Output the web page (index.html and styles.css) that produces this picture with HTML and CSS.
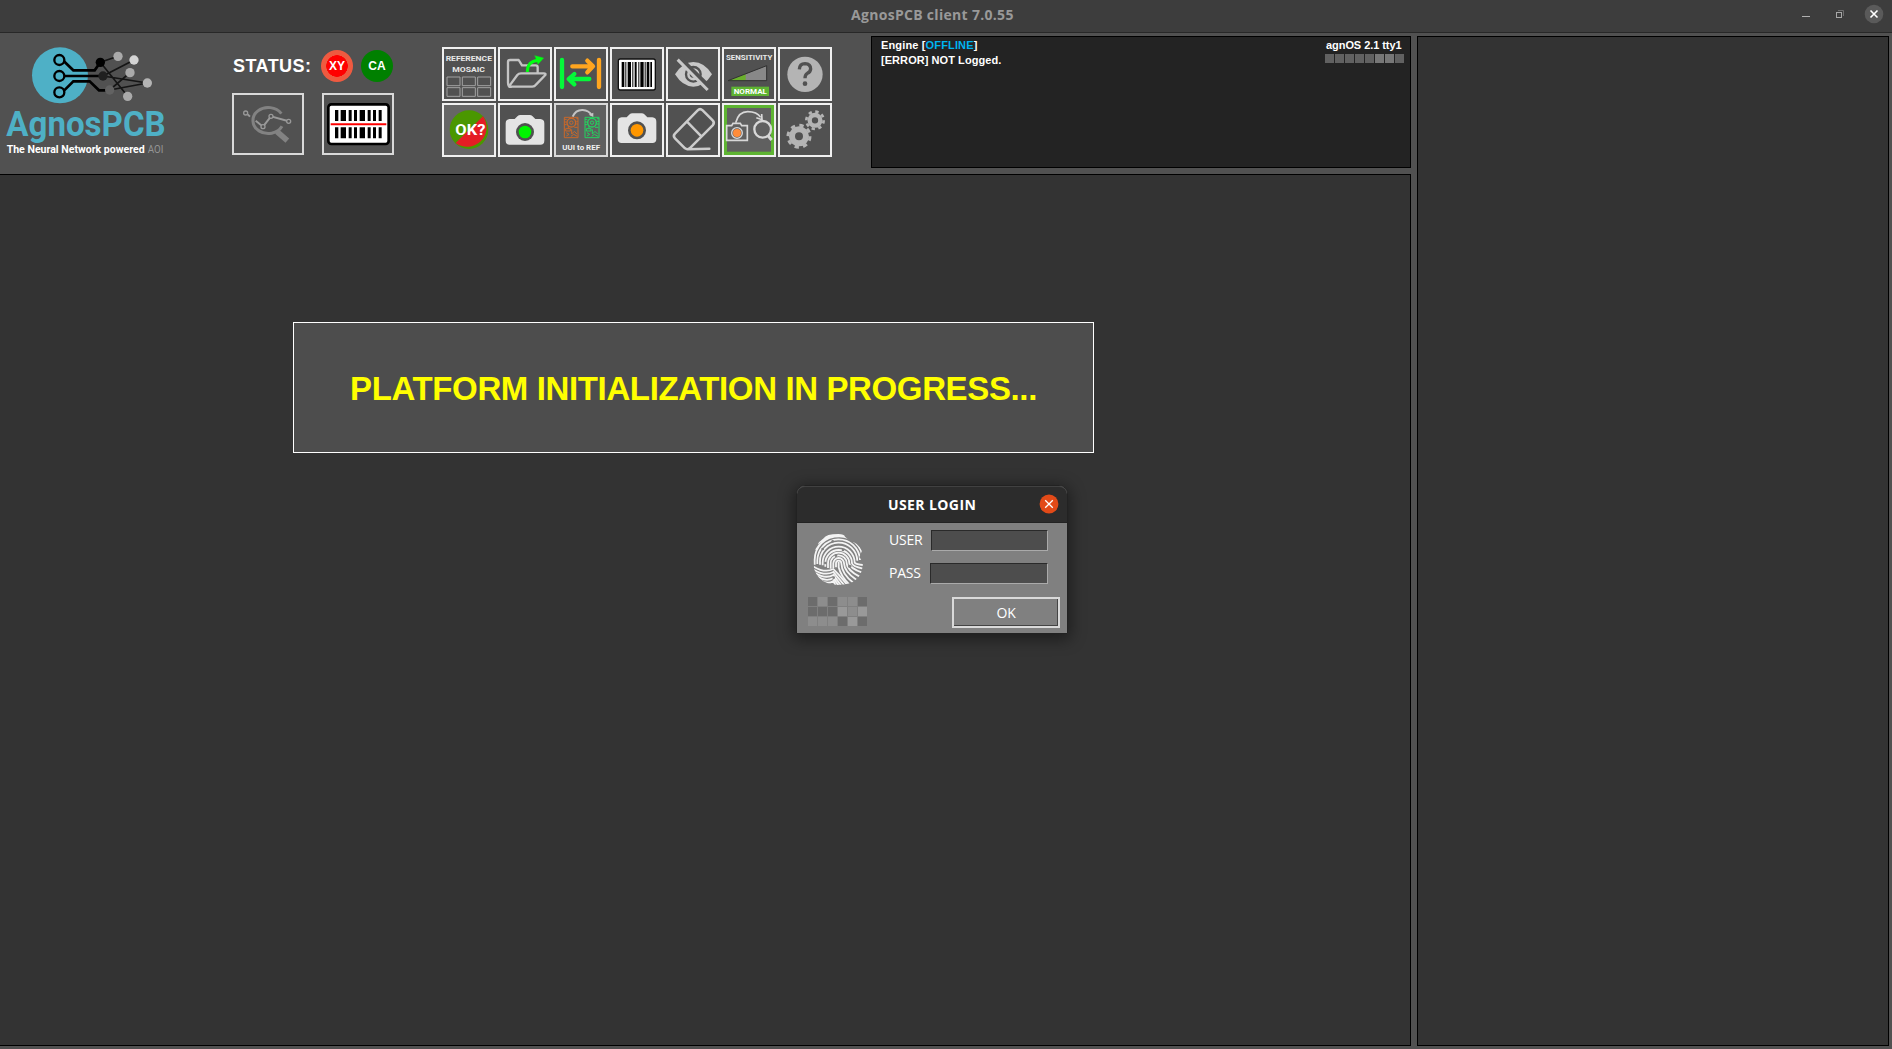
FILE: index.html
```html
<!DOCTYPE html>
<html lang="en">
<head>
<meta charset="utf-8">
<title>AgnosPCB client 7.0.55</title>
<link rel="stylesheet" href="styles.css">
</head>
<body>
<div class="titlebar">
  <span class="title">AgnosPCB client 7.0.55</span>
  <svg class="winctl" width="100" height="32" viewBox="0 0 100 32" fill="none">
    <path d="M10 16.500h8" stroke="#b0b0b0"/>
    <path d="M46 10.500h5.500v5.500" stroke="#6f6f6f"/>
    <rect x="44.500" y="12.500" width="5" height="5" stroke="#a8a8a8"/>
    <circle cx="82" cy="14" r="9.300" fill="#5a5a5a"/>
    <path d="M78.500 10.500l7 7m0-7l-7 7" stroke="#fff" stroke-width="1.600"/>
  </svg>
</div>
<div class="workspace">
  <div class="left">
    <header class="header">
      <svg class="logo" width="185" height="138" viewBox="0 9 555 414">
        <circle cx="180" cy="136" r="84" fill="#4eb0c6"/>
        <g fill="none" stroke="#000" stroke-width="8">
          <circle cx="178" cy="90" r="15" stroke-width="7"/><circle cx="178" cy="138" r="15" stroke-width="7"/><circle cx="178" cy="187" r="15" stroke-width="7"/>
          <path d="M191 93L220 121H284L301 97M194 138H309M192 182L220 154H269L297 181H330"/>
        </g>
        <g fill="none" stroke="#151515" stroke-width="5">
          <path d="M301 97L354 79M301 97L383 199M309 138L402 90M309 138L442 159M329 180L390 128M329 180L442 159"/>
        </g>
        <circle cx="301" cy="97" r="14" fill="#000"/><circle cx="309" cy="138" r="14" fill="#202020"/><circle cx="329" cy="180" r="14" fill="#626262"/>
        <g fill="#aaa"><circle cx="354" cy="79" r="14"/><circle cx="390" cy="128" r="14"/><circle cx="383" cy="199" r="14"/><circle cx="442" cy="159" r="14" fill="#b4b4b4"/><circle cx="402" cy="90" r="14" fill="#d4d4d4"/></g>
        <text x="19" y="319" font-size="104" font-weight="700" fill="#4eb0c6" textLength="478" lengthAdjust="spacingAndGlyphs">AgnosPCB</text>
        <text x="20" y="369" font-size="34" font-weight="700" fill="#fff" textLength="414" lengthAdjust="spacingAndGlyphs">The Neural Network powered</text>
        <text x="443" y="370" font-size="35" fill="#949494" textLength="47" lengthAdjust="spacingAndGlyphs">AOI</text>
      </svg>
      <div class="status">
        <div class="status-row">
          <span class="status-label">STATUS:</span>
          <span class="dot xy">XY</span><span class="dot ca">CA</span>
        </div>
        <div class="status-buttons">
          <div class="bigbtn">
            <svg width="68" height="58" viewBox="57 195 204 174" fill="none" stroke="#828282">
              <path d="M199 251A46 39 0 1 0 201 289" stroke-width="9"/><path d="M186 305L217 332" stroke-width="17"/>
              <path d="M98 253l7 7M122 272L144 290L168 259L221 274" stroke="#999" stroke-width="6"/>
              <g stroke="#999" stroke-width="4" fill="#515151"><circle cx="92" cy="249" r="6"/><circle cx="144" cy="290" r="6"/><circle cx="168" cy="259" r="6"/><circle cx="221" cy="274" r="6"/></g>
            </svg>
          </div>
          <div class="bigbtn">
            <svg width="68" height="58" viewBox="327 195 204 174">
              <rect x="340" y="223" width="181" height="119" rx="9" fill="#fff" stroke="#000" stroke-width="8"/>
              <path d="M360 240h10v33h-10zM377 240h16v33h-16zM401 240h9v33h-9zM417 240h9v33h-9zM434 240h16v33h-16zM458 240h9v33h-9zM474 240h9v33h-9zM491 240h9v33h-9zM360 292h10v33h-10zM377 292h16v33h-16zM401 292h9v33h-9zM417 292h9v33h-9zM434 292h16v33h-16zM458 292h9v33h-9zM474 292h9v33h-9zM491 292h9v33h-9z"/>
              <path d="M347 283H514" stroke="#f00" stroke-width="6"/>
            </svg>
          </div>
        </div>
      </div>
      <div class="tools">
        <div class="tool"><svg viewBox="27 27 150 150">
          <g font-weight="700" font-size="23" fill="#e8e8e8"><text x="32" y="64" textLength="139" lengthAdjust="spacingAndGlyphs">REFERENCE</text><text x="52" y="95" textLength="98" lengthAdjust="spacingAndGlyphs">MOSAIC</text></g>
          <path d="M36 111h39v26H36zM82 111h39v26H82zM128 111h39v26h-39zM36 143h39v26H36zM82 143h39v26H82zM128 143h39v26h-39z" fill="none" stroke="#a2a2a2" stroke-width="3"/>
        </svg></div>
        <div class="tool"><svg viewBox="195 27 150 150" fill="none" stroke-linejoin="round" stroke-linecap="round">
          <path d="M222 139Q219 134 219 128V66Q219 60 225 60H251L261 76H302Q308 76 308 82V98M222 139Q225 142 230 140H292Q299 140 303 134L331 105Q333 100 327 100H258Q251 100 247 105Z" stroke="#c4c4c4" stroke-width="7"/>
          <path d="M277 96Q277 64 309 61" stroke="#0f1" stroke-width="9" stroke-linecap="butt"/><path d="M300 47L326 54L309 73Z" fill="#0f1" stroke="#0f1"/>
        </svg></div>
        <div class="tool"><svg viewBox="363 27 150 150" fill="none" stroke-width="13" stroke-linecap="round" stroke-linejoin="round">
          <path d="M381 60V141M463 117H403M418 102L401 117L418 133" stroke="#05f83a"/><path d="M492 60V141M412 79H473M457 62L474 79L457 97" stroke="#ffa51f"/>
        </svg></div>
        <div class="tool"><svg viewBox="-75 27 150 150">
          <rect x="-56" y="57" width="111" height="93" rx="6" fill="#fff" stroke="#111" stroke-width="4"/>
          <path d="M-46 66h8v75h-8zM-35 66h3v75h-3zM-28 66h10v75h-10zM-14 66h3v75h-3zM-7 66h6v75h-6zM4 66h3v75H4zM10 66h10v75H10zM23 66h3v75h-3zM29 66h8v75h-8zM40 66h5v75h-5z"/>
        </svg></div>
        <div class="tool"><svg viewBox="114 27 150 150">
          <path d="M135 103Q158 66 190 66Q223 66 246 103Q223 140 190 140Q158 140 135 103Z" fill="#c8c8c8"/>
          <circle cx="190" cy="103" r="22" fill="none" stroke="#515151" stroke-width="7"/><path d="M190 91a11 11 0 1 0 11 12h-11z" fill="#515151"/>
          <path d="M149 53L242 145" stroke="#515151" stroke-width="13"/><path d="M143 59L233 150" stroke="#c8c8c8" stroke-width="9"/>
        </svg></div>
        <div class="tool"><svg viewBox="282 27 150 150">
          <text x="288" y="59" font-size="22" font-weight="700" fill="#e8e8e8" textLength="139" lengthAdjust="spacingAndGlyphs">SENSITIVITY</text>
          <path d="M294 122L410 77V122Z" fill="#888"/><path d="M294 122L347 102V122Z" fill="#6ab02c"/><path d="M294 122L410 77V122Z" fill="none" stroke="#303030" stroke-width="3"/>
          <rect x="304" y="140" width="113" height="28" fill="#5eb432"/><text x="311" y="162" font-size="23" font-weight="700" fill="#fff" textLength="100" lengthAdjust="spacingAndGlyphs">NORMAL</text>
        </svg></div>
        <div class="tool"><svg viewBox="450 27 150 150">
          <circle cx="525" cy="103" r="53" fill="#b4b4b4"/><path d="M508 88Q509 71 525 71Q542 72 542 87Q541 96 532 100Q525 104 525 115" fill="none" stroke="#515151" stroke-width="10"/><circle cx="525" cy="131" r="7" fill="#515151"/>
        </svg></div>
        <div class="tool lit"><svg viewBox="27 195 150 150">
          <circle cx="102" cy="269" r="58" fill="#4a9700"/><path d="M62 309L144 229A58 58 0 0 1 62 309Z" fill="#e41d24"/>
          <text x="61" y="284" font-size="46" font-weight="700" fill="#fff" textLength="90" lengthAdjust="spacingAndGlyphs">OK?</text>
        </svg></div>
        <div class="tool"><svg viewBox="195 195 150 150">
          <path d="M224 237H239L248 228Q251 225 256 225H284Q289 225 292 228L301 237H316Q328 238 328 250V302Q328 314 316 314H224Q212 314 212 302V250Q212 238 224 237Z" fill="#e4e4e4"/><circle cx="270" cy="276" r="27" fill="#515151"/><circle cx="270" cy="276" r="19" fill="#00f500"/>
        </svg></div>
        <div class="tool dim"><svg viewBox="363 195 150 150" fill="none">
          <g stroke="#c8682a" stroke-width="3">
            <path d="M388 232h41v61h-41zM388 238h7m-7 8h7m-7 8h7m29-18h5m-5 8h5m-5 8h5M392 266h14v7h-14zM394 278l8 5-8 5M410 268v14l8-8 8 8M408 289l8-6 11 6M418 262h10M400 257v8"/><circle cx="409" cy="248" r="13" stroke-width="4"/><circle cx="409" cy="248" r="5"/>
          </g>
          <g stroke="#22d55e" stroke-width="3"><path d="M450 232h42v61h-42zM450 238h7m-7 8h7m-7 8h7m29-18h6m-6 8h6m-6 8h6M454 266h14v7h-14zM456 278l8 5-8 5M472 268v14l8-8 8 8M470 289l8-6 11 6M480 262h10M462 257v8"/><circle cx="471" cy="248" r="13" stroke-width="4"/><circle cx="471" cy="248" r="5"/></g>
          <path d="M413 230Q422 209 443 210Q462 211 470 226" stroke="#c4c4c4" stroke-width="6"/><path d="M461 224l14 7v-13z" fill="#c4c4c4"/>
          <text x="382" y="329" font-size="22" font-weight="700" fill="#f0f0f0" textLength="113" lengthAdjust="spacingAndGlyphs">UUI to REF</text>
        </svg></div>
        <div class="tool"><svg viewBox="195 200 150 150">
          <path d="M224 237H239L248 228Q251 225 256 225H284Q289 225 292 228L301 237H316Q328 238 328 250V302Q328 314 316 314H224Q212 314 212 302V250Q212 238 224 237Z" fill="#e4e4e4"/><circle cx="270" cy="276" r="27" fill="#515151"/><circle cx="270" cy="276" r="19" fill="#ff9700"/>
        </svg></div>
        <div class="tool"><svg viewBox="114 195 150 150" fill="none" stroke="#ccc" stroke-width="7.500" stroke-linejoin="round" stroke-linecap="round">
          <path d="M203 211Q210 204 218 211L248 241Q255 248 248 256L179 325Q172 330 165 325L135 295Q128 288 135 281ZM171 245L214 289M172 328L238 326"/>
        </svg></div>
        <div class="tool active"><svg viewBox="282 195 150 150" fill="none">
          <rect x="282" y="195" width="150" height="150" fill="#5eb432"/><rect x="291" y="204" width="132" height="131" fill="#606060"/>
          <g stroke="#d8d8d8" stroke-width="5"><path d="M294 257H305L309 250H331L335 257H352V301H290V257Z"/><circle cx="321" cy="279" r="16" stroke-width="4"/><path d="M317 248Q326 215 353 215Q381 215 392 232"/><path d="M379 233L396 239L395 222"/><circle cx="398" cy="268" r="25" stroke-width="7"/><path d="M414 287L425 300" stroke-width="9"/></g><circle cx="321" cy="279" r="12" fill="#ff8c3a"/>
        </svg></div>
        <div class="tool"><svg viewBox="450 195 150 150" fill="none" stroke="#b4b4b4">
          <circle cx="507" cy="289" r="21" stroke-width="18"/><circle cx="507" cy="289" r="33" stroke-width="9" stroke-dasharray="13 12.920"/>
          <circle cx="555" cy="241" r="16" stroke-width="13"/><circle cx="555" cy="241" r="26" stroke-width="8" stroke-dasharray="10 10.420"/>
        </svg></div>
      </div>
      <div class="console">
        <div class="log"><div class="l1">Engine [<span class="offline">OFFLINE</span>]</div><div class="l2">[ERROR] NOT Logged.</div></div>
        <div class="sys"><div class="l3">agnOS 2.1 tty1</div>
          <div class="blocks"><i></i><i></i><i></i><i></i><i></i><i class="b2"></i><i class="b2"></i><i></i></div></div>
      </div>
    </header>
    <main class="canvas"><div class="message"><span>PLATFORM INITIALIZATION IN PROGRESS...</span></div></main>
  </div>
  <aside class="side"></aside>
</div>
<div class="dialog">
  <div class="dialog-title"><span>USER LOGIN</span>
    <svg class="dialog-close" width="20" height="20" viewBox="0 0 20 20"><circle cx="10" cy="10" r="9.400" fill="#e24a18"/><path d="M6.200 6.200l7.600 7.600m0-7.600l-7.600 7.600" stroke="#fff" stroke-width="1.300"/></svg>
  </div>
  <div class="dialog-body">
    <div class="ident">
      <svg class="finger" width="52" height="54" viewBox="93 189 156 162" fill="none" stroke="#f4f4f4" stroke-width="5.400">
        <clipPath id="tip"><path d="M128 205Q135 192 172 192Q190 192 192 200L209 215Q228 215 243 242L235 262L246 274Q246 345 171 345Q96 342 96 268Q97 225 128 205Z"/></clipPath>
        <g clip-path="url(#tip)">
          <path d="M173 276V292Q180 320 206 345M165 292V280a8 8 0 0 1 16 0Q182 312 217 338M157 294V280a16 16 0 0 1 32 0Q190 306 227 330M149 296V280a24 24 0 0 1 48 0Q198 300 236 320M141 294V280a32 32 0 0 1 64 0Q206 294 244 308M133 290V280a40 40 0 0 1 80 0Q214 288 246 296M125 286V278a48 48 0 0 1 96 0Q226 284 247 285M117 284V276a56 56 0 0 1 112-4M109 282V274a64 64 0 0 1 128-4M101 284V272a72 72 0 0 1 144-4M105 240a76 72 0 0 1 122-20M110 220q56-42 110-10M120 208q50-26 82-6M128 200q36-16 64-4"/>
          <path d="M98 290Q132 310 157 297L173 314L200 346M98 299Q132 319 157 306L190 346M102 309Q134 328 157 315L180 346M108 319Q136 337 157 324L172 346M117 330Q140 345 157 333L164 346"/>
        </g>
        <g fill="#808080" stroke="none"><circle cx="155" cy="214" r="4"/><circle cx="186" cy="240" r="4"/><circle cx="125" cy="237" r="4"/><circle cx="165" cy="257" r="4"/><circle cx="133" cy="279" r="4"/><circle cx="206" cy="289" r="5"/><circle cx="158" cy="323" r="4"/></g>
      </svg>
      <div class="blocks id"><i></i><i class="m"></i><i></i><i class="m"></i><i class="m"></i><i></i><i></i><i></i><i></i><i class="h"></i><i class="m"></i><i class="h"></i><i class="m"></i><i class="m"></i><i class="m"></i><i></i><i class="h"></i><i></i></div>
    </div>
    <div class="form">
      <div class="field"><label>USER</label><div class="input"></div></div>
      <div class="field second"><label>PASS</label><div class="input wide"></div></div>
      <div class="ok">OK</div>
    </div>
  </div>
</div>
</body>
</html>
```
FILE: styles.css
```css
* { box-sizing: border-box; }
body { margin: 0; width: 1892px; height: 1049px; overflow: hidden; background: #515151; font-family: "Liberation Sans", Arial, sans-serif; color: #fff; position: relative; display: flex; flex-direction: column; }
svg { display: block; font-family: Roboto, sans-serif; }
.titlebar { height: 33px; background: #3d3d3d; border-bottom: 1px solid #282828; display: flex; font: 700 14px/30px "Open Sans", "Noto Sans", sans-serif; color: #999; }
.title { margin-left: 851px; white-space: nowrap; letter-spacing: .3px; }
.winctl { margin-left: auto; }
.workspace { flex: 1; display: flex; gap: 6px; padding: 0 3px 3px 0; }
.left { width: 1411px; display: flex; flex-direction: column; }
.header { height: 141px; display: flex; align-items: flex-start; }
.status { margin-left: 47px; width: 162px; padding-top: 17px; }
.status-row { display: flex; height: 32px; align-items: center; }
.status-label { width: 89px; font-size: 18px; font-weight: 700; letter-spacing: .45px; padding-left: 1px; line-height: 32px; }
.dot { width: 32px; height: 32px; border-radius: 50%; font-size: 12px; font-weight: 700; line-height: 32px; text-align: center; flex: none; }
.xy { background: radial-gradient(circle, #f00 0 10.500px, #ef5a40 11px); margin-right: 8px; }
.ca { background: #008000; }
.status-buttons { display: flex; gap: 18px; margin-top: 11px; }
.bigbtn { width: 72px; height: 62px; border: 2px solid #d9d9d9; }
.tools { margin: 14px 0 0 48px; display: grid; grid-template-columns: repeat(7, 54px); grid-auto-rows: 54px; gap: 2px; }
.tool { border: 2px solid #f0f0f0; }
.tool svg { width: 50px; height: 50px; }
.tool.lit { background: #666; }
.tool.dim { background: #5f5f5f; border-color: #d9d9d9; }
.console { margin: 3px 0 0 39px; width: 540px; height: 132px; border: 1px solid #000; background: #232323; display: flex; justify-content: space-between; padding: 1px 6px 0 9px; font-size: 11px; font-weight: 700; line-height: 15px; white-space: nowrap; }
.offline { color: #00b4f0; }
.l1 { letter-spacing: .15px; }
.l2 { letter-spacing: .06px; }
.l3 { letter-spacing: -.06px; padding-left: 1px; }
.blocks { display: grid; grid-template-columns: repeat(8, 9px); grid-auto-rows: 9px; gap: 1px; margin-top: 1px; }
.blocks i { background: #616161; }
.blocks .b2 { background: #777; }
.canvas, .side { background: #333; border: 1px solid #000; }
.canvas { flex: 1; border-left: 0; padding: 147px 0 0 293px; }
.side { width: 472px; margin-top: 3px; }
.message { width: 801px; height: 131px; border: 1px solid #fff; background: #4d4d4d; color: #ff0; font-size: 33px; font-weight: 700; line-height: 131px; letter-spacing: -.37px; text-align: center; white-space: nowrap; }
.dialog { position: absolute; left: 796px; top: 485px; width: 272px; height: 149px; border: 1px solid #222; border-radius: 9px 9px 0 0; box-shadow: 0 3px 16px 2px rgba(0,0,0,.45); background: #808080; }
.dialog-title { height: 37px; background: #2c2c2c; border-radius: 8px 8px 0 0; border-top: 1px solid #414141; border-bottom: 1px solid #232323; display: flex; justify-content: flex-end; font: 700 14px/36px "Open Sans", sans-serif; letter-spacing: .4px; padding-right: 8px; }
.dialog-title span { width: 151px; }
.dialog-close { margin-top: 7px; }
.dialog-body { display: flex; height: 110px; }
.ident { width: 88px; padding: 10px 0 0 11px; }
.finger { margin-left: 4px; }
.id { grid-template-columns: repeat(6, 9px); margin-top: 10px; }
.id i { background: #6c6c6c; }
.id .m { background: #8d8d8d; }
.id .h { background: #999; }
.form { width: 175px; padding-top: 7px; font: 14px/20px "Open Sans", sans-serif; }
.field { display: flex; justify-content: space-between; width: 163px; height: 21px; padding-left: 4px; letter-spacing: -.2px; }
.second { margin-top: 12px; }
.input { width: 117px; background: #4d4d4d; border: 1px solid #2a2a2a; border-right-color: #aaa; border-bottom-color: #aaa; }
.wide { width: 118px; }
.ok { margin: 13px 0 0 67px; width: 108px; height: 31px; border: 2px solid #d9d9d9; box-shadow: inset -1px -1px #444; text-align: center; line-height: 27px; letter-spacing: -.3px; }
```
